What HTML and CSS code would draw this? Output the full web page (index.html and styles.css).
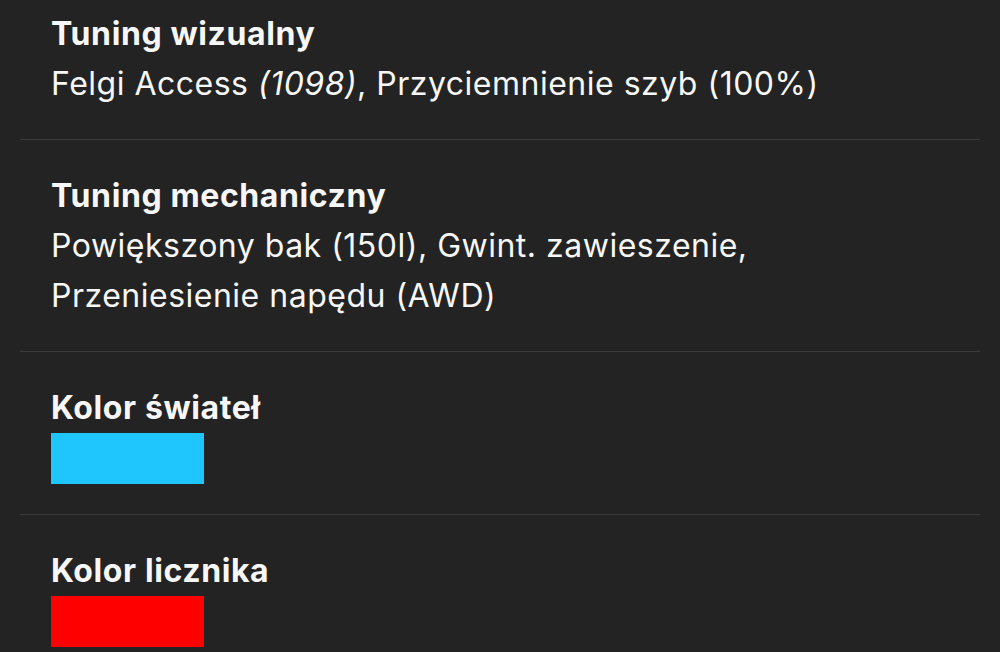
FILE: index.html
```html
<!DOCTYPE html>
<html lang="pl">

<head>
    <meta charset="utf-8">
    <title>Tuning</title>
    <meta name="viewport" content="width=device-width, initial-scale=1.0">
    <link rel="stylesheet" href="styles.css">
</head>

<body>
    <div class="details">
        <div class="row">
            <h3>Tuning wizualny</h3>
            <p>Felgi Access <em>(1098)</em>, Przyciemnienie szyb (100%)</p>
        </div>
        <div class="row">
            <h3>Tuning mechaniczny</h3>
            <p>Powiększony bak (150l), Gwint. zawieszenie,<br>Przeniesienie napędu (AWD)</p>
        </div>
        <div class="row">
            <h3>Kolor świateł</h3>
            <div class="swatch swatch-lights"></div>
        </div>
        <div class="row">
            <h3>Kolor licznika</h3>
            <div class="swatch swatch-counter"></div>
        </div>
    </div>
</body>

</html>
```

FILE: styles.css
```css
* {
    margin: 0;
    padding: 0;
    box-sizing: border-box;
}

body {
    font-family: Inter, "Noto Sans", sans-serif;
    background: #232323;
    color: #f7f7f7;
    overflow: hidden;
}

.details {
    margin: -22px 20px 0;
}

.row {
    padding: 31px 0 30px 31px;
    border-bottom: 1px solid #3a3a3a;
}

.row h3 {
    font-size: 32px;
    line-height: 50px;
    font-weight: 700;
    letter-spacing: 0.6px;
}

.row p {
    font-size: 32px;
    line-height: 50px;
    font-weight: 400;
    letter-spacing: 0.5px;
}

.swatch {
    width: 153px;
    height: 51px;
}

.swatch-lights {
    background: #1fc6fd;
}

.swatch-counter {
    background: #fe0000;
}
```
